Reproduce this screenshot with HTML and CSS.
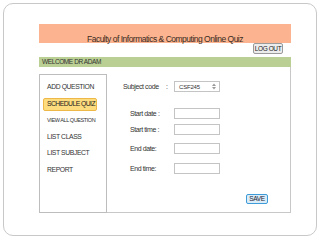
FILE: index.html
```html
<!DOCTYPE html>
<html lang="en">
<head>
    <meta charset="UTF-8">
    <meta name="viewport" content="width=device-width, initial-scale=1.0">
    <title>Online Quiz</title>
    <link rel="stylesheet" href="styles.css">
</head>
<body>
    <div class="slide">
        <div class="app">
            <div class="header">Faculty of Informatics &amp; Computing Online Quiz</div>
            <div class="toolbar"><button class="btn-logout">LOG OUT</button></div>
            <div class="welcome">WELCOME DR ADAM</div>

            <div class="content">
                <!-- menu kiri -->
                <div class="sidebar">
                    <div class="menu-item">ADD QUESTION</div>
                    <div class="menu-item active">SCHEDULE QUIZ</div>
                    <div class="menu-item small">VIEW ALL QUESTION</div>
                    <div class="menu-item">LIST CLASS</div>
                    <div class="menu-item">LIST SUBJECT</div>
                    <div class="menu-item">REPORT</div>
                </div>

                <!-- borang jadual kuiz -->
                <div class="main">
                    <div class="row row-subject">
                        <span class="label-code">Subject code</span>
                        <span class="colon">:</span>
                        <div class="select">
                            CSF245
                            <svg class="spin" width="4" height="7" viewBox="0 0 4 7">
                                <path d="M0 3 L2 0.5 L4 3 Z M0 4 L2 6.5 L4 4 Z" fill="#9a9a9a"/>
                            </svg>
                        </div>
                    </div>
                    <div class="row row-start">
                        <span class="label">Start date :</span>
                        <div class="input"></div>
                    </div>
                    <div class="row row-time">
                        <span class="label">Start time :</span>
                        <div class="input"></div>
                    </div>
                    <div class="row row-end">
                        <span class="label">End date:</span>
                        <div class="input"></div>
                    </div>
                    <div class="row row-endtime">
                        <span class="label">End time:</span>
                        <div class="input"></div>
                    </div>
                    <div class="actions"><button class="btn-save">SAVE</button></div>
                </div>
            </div>
        </div>
    </div>
</body>
</html>
```

FILE: styles.css
```css
body {
    margin: 0;
    background: white;
    font-family: "Liberation Sans", Arial, sans-serif;
    color: #333;
    letter-spacing: -0.4px;
}
.slide {
    margin: 3px;
    width: 314px;
    height: 233px;
    border: 1px solid #c8c8c8;
    border-radius: 10px;
    padding: 20px 0 0 35px;
    box-sizing: border-box;
}
.app { width: 252px; }
.header {
    height: 19px;
    background: #fbb48f;
    font-size: 8.5px;
    line-height: 9px;
    letter-spacing: -0.5px;
    text-align: center;
    padding-top: 11px;
    box-sizing: border-box;
    color: #3a2a22;
    white-space: nowrap;
}
.toolbar {
    height: 14px;
    display: flex;
    justify-content: flex-end;
    padding-right: 8px;
}
.btn-logout {
    width: 30px;
    height: 11px;
    padding: 0;
    font-family: inherit;
    font-size: 6.5px;
    line-height: 9px;
    letter-spacing: -0.4px;
    white-space: nowrap;
    color: #222;
    background: #ececec;
    border: 1px solid #9a9a9a;
    border-radius: 2px;
}
.welcome {
    height: 10px;
    background: #b9cf93;
    font-size: 6.5px;
    line-height: 10px;
    padding-left: 3px;
    color: #333;
}
.content { display: flex; }
.sidebar {
    width: 68px;
    height: 139px;
    margin-top: 7px;
    border: 1px solid #bdbdbd;
    box-sizing: border-box;
    padding-top: 6px;
}
.menu-item {
    height: 11px;
    line-height: 10px;
    margin: 0 9px 3.5px 3px;
    padding: 0 3px;
    font-size: 6.8px;
    border: 1px solid transparent;
    border-radius: 2px;
    white-space: nowrap;
}
.menu-item.small { font-size: 5.5px; }
.menu-item.active {
    background: #fddc7e;
    border-color: #eeb848;
    color: #222;
    letter-spacing: -0.55px;
}
.main {
    flex: 1;
    height: 146px;
    border-right: 1px solid #c8c8c8;
    border-bottom: 1px solid #c8c8c8;
    box-sizing: border-box;
    padding-top: 14px;
    font-size: 7px;
}
.row {
    display: flex;
    align-items: center;
    height: 11px;
}
.row-subject { padding-left: 16px; }
.row-start { margin-top: 16px; }
.row-time { margin-top: 5px; }
.row-end { margin-top: 8px; }
.row-endtime { margin-top: 9px; }
.label-code { width: 43px; }
.colon { width: 8px; }
.label { width: 44px; margin-left: 23px; }
.input, .select {
    width: 46px;
    height: 11px;
    border: 1px solid #c4c4c4;
    box-sizing: border-box;
}
.select {
    display: flex;
    align-items: center;
    justify-content: space-between;
    padding: 0 3px 0 4px;
    font-size: 6px;
    letter-spacing: -0.2px;
}
.actions {
    display: flex;
    justify-content: flex-end;
    margin-top: 20px;
    padding-right: 22px;
}
.btn-save {
    width: 22px;
    height: 10px;
    padding: 0;
    font-family: inherit;
    font-size: 6.5px;
    line-height: 8px;
    letter-spacing: -0.4px;
    color: #223;
    background: #d9ecf7;
    border: 1px solid #3d9bd8;
    border-radius: 2px;
}
```
